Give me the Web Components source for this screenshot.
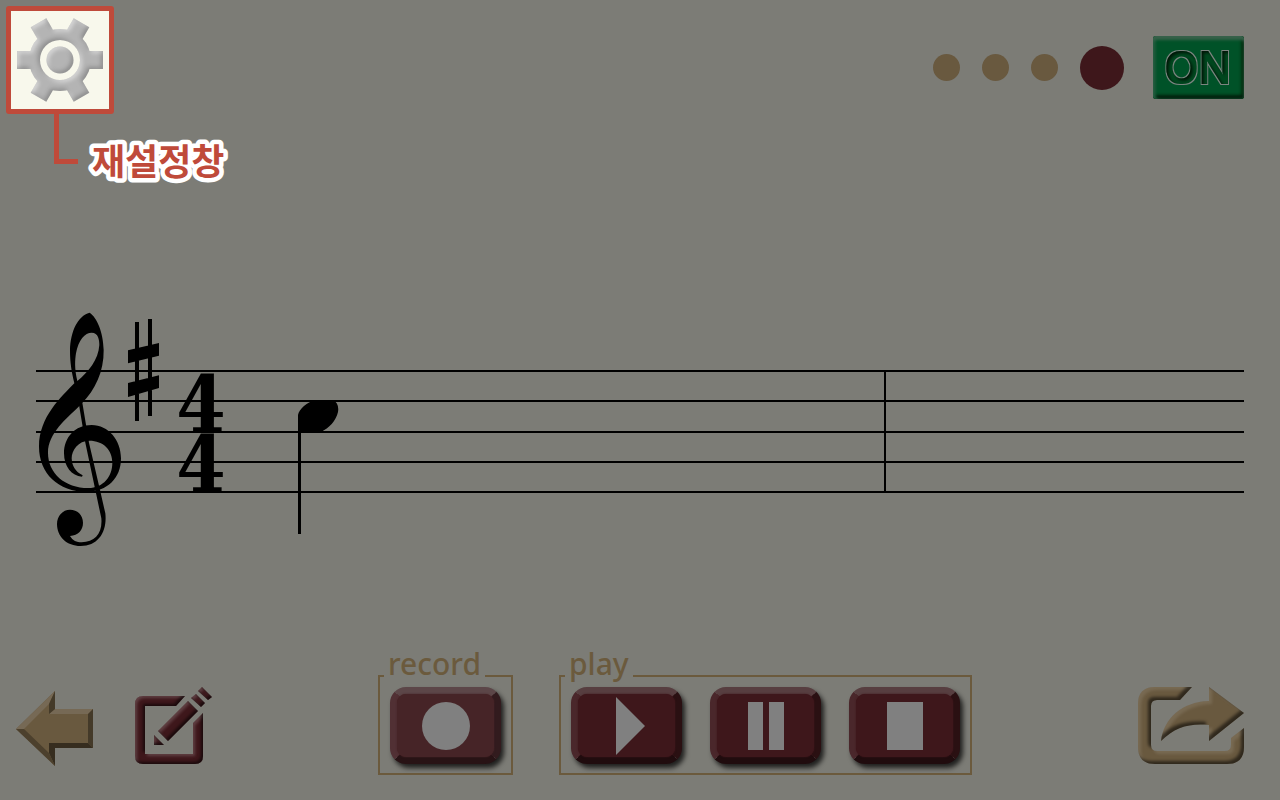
<!DOCTYPE html>
<html lang="ko">
<head>
<meta charset="utf-8">
<meta name="viewport" content="width=device-width, initial-scale=1">
<title>Score recorder</title>
<style>
html, body { margin: 0; background: #7c7c76; }
body { font-family: "Noto Sans", "Noto Sans CJK KR", sans-serif; }
</style>
</head>
<body>
<score-app></score-app>
<script>
function define(name, html) {
  const t = document.createElement('template');
  t.innerHTML = html;
  customElements.define(name, class extends HTMLElement {
    constructor() {
      super();
      this.attachShadow({ mode: 'open' }).append(t.content.cloneNode(true));
    }
  });
}

/* Chiselled edge: light on the upper left, dark on the lower right. */
const bevel = (d, blur, light, dark) => `
<filter id="bevel" x="-10%" y="-10%" width="120%" height="120%" color-interpolation-filters="sRGB">
  <feGaussianBlur in="SourceAlpha" stdDeviation="${blur}" result="a"/>
  <feOffset in="a" dx="${d}" dy="${d}" result="lo"/>
  <feComposite in="SourceAlpha" in2="lo" operator="out" result="le"/>
  <feFlood flood-color="#fff" flood-opacity="${light}"/>
  <feComposite in2="le" operator="in" result="lc"/>
  <feOffset in="a" dx="-${d}" dy="-${d}" result="so"/>
  <feComposite in="SourceAlpha" in2="so" operator="out" result="se"/>
  <feFlood flood-color="#000" flood-opacity="${dark}"/>
  <feComposite in2="se" operator="in" result="sc"/>
  <feMerge><feMergeNode in="SourceGraphic"/><feMergeNode in="lc"/><feMergeNode in="sc"/></feMerge>
</filter>`;

const plainButton = `
:host { display: block; }
button { display: block; margin: 0; padding: 0; border: 0; background: none; cursor: pointer; }
svg { display: block; overflow: visible; }`;

define('settings-callout', `
<style>
:host { display: block; }
button { display: flex; align-items: center; justify-content: center; box-sizing: border-box;
  width: 108px; height: 108px; padding: 0; border: 5px solid #bf4a3a; border-radius: 3px; background: #f8f8ec; }
svg { display: block; overflow: visible; }
.row { display: flex; align-items: flex-start; padding-left: 48px; }
.line { box-sizing: border-box; width: 24px; height: 50px; border: solid #bf4a3a; border-width: 0 0 5px 5px; }
label { padding: 24px 0 0 14px; }
text { font: 700 36px "Noto Sans CJK KR", sans-serif; fill: #bf4a3a;
  stroke: #fff; stroke-width: 9px; stroke-linejoin: round; paint-order: stroke fill; }
</style>
<button id="gear" type="button">
<svg width="88" height="88" viewBox="-44 -44 88 88">
${bevel(2, 2, .5, .22)}
<g filter="url(#bevel)" fill="#b4b4b4">
<path d="M-43-9H-26V9H-43zM43-9H26V9H43z"/>
<path d="M-43-9H-26V9H-43zM43-9H26V9H43z" transform="rotate(60)"/>
<path d="M-43-9H-26V9H-43zM43-9H26V9H43z" transform="rotate(120)"/>
<path fill-rule="evenodd" d="M-31 0a31 31 0 1 0 62 0a31 31 0 1 0-62 0zM-20 0a20 20 0 1 0 40 0a20 20 0 1 0-40 0z"/>
<circle r="13.5"/>
</g></svg>
</button>
<div class="row"><span class="line"></span><label for="gear"><svg width="134" height="48"><text x="0" y="37">재설정창</text></svg></label></div>`);

define('beat-counter', `
<style>
:host { display: flex; align-items: center; gap: 22px; }
i { width: 27px; height: 27px; border-radius: 50%; background: #69593f; }
i.now { width: 44px; height: 44px; background: #3e171b; }
</style><i></i><i></i><i></i><i class="now"></i>`);

define('metronome-switch', `
<style>
:host { display: block; }
button { display: block; box-sizing: border-box;
  width: 91px; height: 63px; padding: 0; border: 0; border-radius: 3px; background: #005228;
  box-shadow: inset 0 4px 3px #37614a, inset 3px 0 3px #1c5c3c, inset 0 -4px 3px #00200c, inset -3px 0 3px #00300f; }
svg { display: block; }
text { font: 400 43px "Noto Sans", sans-serif; text-anchor: middle; }
</style>
<button type="button" aria-pressed="true"><svg width="91" height="63">
<defs><filter id="sunk" color-interpolation-filters="sRGB">
<feMorphology in="SourceAlpha" operator="dilate" radius="2" result="big"/>
<feMorphology in="SourceAlpha" operator="dilate" radius="1" result="fill"/>
<feFlood flood-color="#7c8480"/><feComposite in2="big" operator="in" result="edge"/>
<feFlood flood-color="#00481f"/><feComposite in2="fill" operator="in" result="face"/>
<feGaussianBlur in="fill" stdDeviation="1.5"/><feOffset dx="2" dy="2" result="off"/>
<feComposite in="fill" in2="off" operator="out" result="sh"/>
<feFlood flood-color="#001506"/><feComposite in2="sh" operator="in" result="shade"/>
<feMerge><feMergeNode in="edge"/><feMergeNode in="face"/><feMergeNode in="shade"/></feMerge>
</filter></defs>
<text x="45" y="47" filter="url(#sunk)">ON</text></svg></button>`);

define('music-staff', `
<style>
:host { display: block; padding: 0 36px; }
svg { display: block; width: 100%; height: 260px; overflow: visible; }
.lines { stroke: #000; stroke-width: 2; shape-rendering: crispEdges; }
text { font: 700 79px "DejaVu Serif Condensed", "DejaVu Serif", serif; text-anchor: middle; }
</style>
<svg role="img" aria-label="G major, 4/4">
<g class="lines">
<line x2="100%" y1="71" y2="71"/><line x2="100%" y1="101" y2="101"/><line x2="100%" y1="132" y2="132"/>
<line x2="100%" y1="162" y2="162"/><line x2="100%" y1="192" y2="192"/>
<line x1="70.25%" x2="70.25%" y1="70" y2="193"/>
</g>
<g transform="translate(-16 0) scale(.33333)">
<path fill-rule="evenodd" d="M209 38C230 52 250 95 251 150C252 215 225 270 186 310L175 321C140 355 84 400 84 458C84 520 135 564 205 564C250 563 277 530 277 488C277 450 250 422 208 422C175 422 155 450 155 475C156 498 166 515 188 526L186 530C155 528 132 500 132 460C132 412 165 375 215 375C265 375 303 420 303 475C303 535 262 575 200 575C115 575 57 520 57 440C57 350 125 290 163 250C155 215 150 190 150 150C152 95 172 48 209 38zM172 243C163 205 165 180 168 160C175 120 195 98 215 98C235 98 238 120 238 135C235 180 205 215 172 243z"/>
<path d="M176 308L187 308L207 428L240 570L256 640C262 695 235 738 182 738C140 738 111 710 111 672C111 648 128 629 150 629C172 629 189 645 189 668C189 690 175 706 150 708C158 722 170 727 185 727C225 727 248 700 244 655L226 570L196 428z"/>
<path d="M345 66h12v297h-12zM384 57h12v291h-12zM324 151L417 129V167L324 190zM324 249L417 226V264L324 291z"/>
</g>
<text x="165" y="132">4</text><text x="165" y="192">4</text>
<path d="M262 115C263 109 271 102 280 100H297C301 102 303 106 302 112C300 121 293 128 285 132H265V234H262z"/>
</svg>`);

define('back-button', `
<style>${plainButton}</style>
<button type="button" aria-label="Back"><svg width="77" height="77" viewBox="0 -4 77 77">
<path fill="#69593f" d="M0 38L39 0V18H77V57H39V75z"/>
<path fill="#766955" d="M0 38L39 0L33 13L8 38zM39 18H77L72 23H33z"/>
<path fill="#443a29" d="M39 0V18L33 23V13zM77 18V57L72 52V23z"/>
<path fill="#362d1f" d="M77 57H39L33 52H72zM39 57V75L33 62V52z"/>
<path fill="#4c402d" d="M0 38L39 75L33 62L8 38z"/>
</svg></button>`);

define('edit-button', `
<style>${plainButton}</style>
<button type="button" aria-label="Edit"><svg width="77" height="77">
${bevel(2, 1.4, .18, .6)}
<g fill="#3e171b" filter="url(#bevel)">
<path d="M50 9L41 19H10V67H58V36L68 26V69Q68 77 60 77H8Q0 77 0 69V17Q0 9 8 9z"/>
<path d="M53 14L63 24L33 54L23 44zM19 48L29 58H19zM61 7L70 16L66 20L56 11zM67 0L77 10L73 13L63 4z"/>
</g></svg></button>`);

define('share-button', `
<style>${plainButton}</style>
<button type="button" aria-label="Share"><svg width="106" height="77">
${bevel(3, 1.6, .1, .55)}
<g fill="#69593f" filter="url(#bevel)">
<path d="M54 0L42 13H19Q13 13 13 19V58Q13 64 19 64H87Q93 64 93 58V51L106 41V60Q106 77 89 77H17Q0 77 0 60V17Q0 0 17 0z"/>
<path d="M71 0L106 26L71 54V38C52 36 37 40 23 54C26 31 44 15 71 14z"/>
</g></svg></button>`);

define('transport-button', `
<style>
:host { display: block; --face: #3e171b; --top: #573e40; --left: #4a272b; --right: #2a1012; --bottom: #200c0e; }
:host([soft]) { --face: #462427; --top: #5c4648; --left: #513034; --right: #321b1e; --bottom: #281315; }
button { display: block; box-sizing: border-box;
  width: 111px; height: 77px; padding: 0; border: 7px solid; border-color: var(--top) var(--right) var(--bottom) var(--left);
  border-radius: 16px; background: var(--face); box-shadow: 3px 4px 5px rgba(0,0,0,.75); cursor: pointer; }
span { display: flex; align-items: center; justify-content: center; height: 63px; border-radius: 9px;
  background: var(--face); box-shadow: 0 0 2px var(--face); }
</style>
<button type="button"><span><slot></slot></span></button>`);

define('control-group', `
<style>
:host { display: block; }
fieldset { margin: 0; padding: 0 10px 9px 4px; border: 2px solid #6b5a3d; min-width: 0; }
legend { padding: 0 4px 24px; font: 500 30px/24px "Noto Sans", sans-serif; color: #6b5a3d; }
div { display: flex; gap: 28px; margin: -13px 0 0 6px; }
</style>
<fieldset><legend><slot name="title"></slot></legend><div><slot></slot></div></fieldset>`);

define('score-app', `
<style>
:host { display: flex; flex-direction: column; justify-content: space-between; min-height: 100vh; }
header { display: flex; justify-content: space-between; align-items: flex-start; padding: 6px 36px 22px 6px; }
.status { display: flex; align-items: center; gap: 29px; padding-top: 30px; }
footer { display: flex; justify-content: space-between; align-items: flex-end; padding: 0 36px 25px 16px; }
.left, .groups { display: flex; align-items: flex-end; }
.left { gap: 42px; }
.groups { gap: 46px; }
.left, share-button { margin-bottom: 11px; }
svg { display: block; fill: #808080; }
</style>
<header>
  <settings-callout></settings-callout>
  <div class="status"><beat-counter></beat-counter><metronome-switch></metronome-switch></div>
</header>
<music-staff></music-staff>
<footer>
  <div class="left"><back-button></back-button><edit-button></edit-button></div>
  <div class="groups">
    <control-group><span slot="title">record</span>
      <transport-button soft><svg width="48" height="48"><circle cx="24" cy="24" r="24"/></svg></transport-button>
    </control-group>
    <control-group><span slot="title">play</span>
      <transport-button><svg width="36" height="58"><path d="M7 0L36 29L7 58z"/></svg></transport-button>
      <transport-button><svg width="36" height="48"><path d="M0 0H15V48H0zM21 0H36V48H21z"/></svg></transport-button>
      <transport-button><svg width="36" height="48"><path d="M0 0H36V48H0z"/></svg></transport-button>
    </control-group>
  </div>
  <share-button></share-button>
</footer>`);
</script>
</body>
</html>
